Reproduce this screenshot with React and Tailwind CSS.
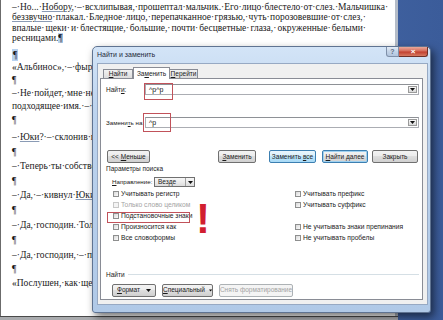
import React from "react";

const serif = "font-['Liberation_Serif','Times_New_Roman',serif]";
const ui = "font-['Liberation_Sans','Arial',sans-serif]";

const topLines = [
  ["–·", "Но...·", { u: "Нобору", r: ",·" }, "–·", "всхлипывая,·", "прошептал·", "мальчик.·", "Его·", "лицо·", "блестело·", "от·", "слез.·", "Мальчишка·"],
  [{ u: "беззвучно", r: "·" }, "плакал.·", "Бледное·", "лицо,·", "перепачканное·", "грязью,·", "чуть·", "порозовевшие·", "от·", "слез,·"],
  ["впалые·", "щеки·", "и·", "блестящие,·", "большие,·", "почти·", "бесцветные·", "глаза,·", "окруженные·", "белыми·"],
];

const lowerLines = [
  { mt: "mt-[6px]", hl: true },
  { mt: "mt-0", a: "«Альбинос»,·–·фыркнул·Ясон.¶" },
  { mt: "mt-[1px]", a: "¶" },
  { mt: "mt-[1px]", a: "–·Не·пойдет,·мне·не·нравится.·Надо·придумать·тебе·более·" },
  { mt: "mt-[1px]", a: "подходящее·имя.·–·Юноша·на·мгновение·задумался.¶" },
  { mt: "mt-[2px]", a: "¶" },
  { mt: "mt-[5px]", a: "–·", u: "Юки", b: "?·–·склонив·голову,·переспросил·мальчик.¶" },
  { mt: "mt-[3px]", a: "¶" },
  { mt: "mt-[2px]", a: "–·Теперь·ты·собственность·Ясона.¶" },
  { mt: "mt-[3px]", a: "¶" },
  { mt: "mt-[2px]", a: "–·Да,·–·кивнул·", u: "Юки", b: ".¶" },
  { mt: "mt-[3px]", a: "¶" },
  { mt: "mt-[3px]", a: "–·Да,·господин.·Только·так·и·никак·иначе.¶" },
  { mt: "mt-[3px]", a: "¶" },
  { mt: "mt-[3px]", a: "–·Да,·господин,·–·послушно·повторил·мальчик.¶" },
  { mt: "mt-[2px]", a: "¶" },
  { mt: "mt-[2px]", a: "«Послушен,·как·щенок»,·–·подумал·Ясон.¶" },
];

function Word({ w }) {
  if (typeof w === "string") return <span>{w}</span>;
  return (
    <span>
      <span className="underline decoration-[#8a9bb5] underline-offset-[1px]">{w.u}</span>
      {w.r}
    </span>
  );
}

function Arrow() {
  return (
    <svg width="5" height="3" viewBox="0 0 5 3">
      <path d="M0 0h5L2.5 3z" fill="#111" />
    </svg>
  );
}

const btnBase = "flex items-center justify-center h-[13px] rounded-[2px] border text-[6.5px] whitespace-nowrap overflow-hidden text-[#1b1b1b]";
const btnNormal = "border-[#707070] bg-[linear-gradient(#f3f3f3,#ececec_45%,#dedede_50%,#d0d0d0)]";
const btnHover = "border-[#3c7fb1] bg-[linear-gradient(#eaf6fd,#d9f0fc_45%,#bee6fd_50%,#a7d9f5)]";
const btnDefault = "border-[#3c7fb1] bg-[linear-gradient(#f3f3f3,#ececec_45%,#dedede_50%,#d0d0d0)] shadow-[inset_0_0_0_1px_#9fd1f0]";

function Field({ value }) {
  return (
    <div className="flex-1 h-[11px] border border-[#abadb3] border-t-[#8e9196] bg-white flex items-center">
      <span className="pl-[3px] text-[7px] leading-none text-[#111]">{value}</span>
      <div className="ml-auto mr-[1px] w-[9px] h-[7px] border border-[#9a9a9a] bg-[linear-gradient(#f7f7f7,#d9d9d9)] flex items-center justify-center">
        <Arrow />
      </div>
    </div>
  );
}

function Check({ label, disabled }) {
  return (
    <div className="h-[11px] flex items-center gap-[2px] whitespace-nowrap">
      <div
        className={
          disabled
            ? "w-[6px] h-[6px] border border-[#c8c8c8] bg-[#f4f4f4]"
            : "w-[6px] h-[6px] border border-[#8e8f8f] bg-[linear-gradient(135deg,#d8d8d8,#fbfbfb)]"
        }
      />
      {label && (
        <span className={disabled ? "text-[6.7px] text-[#a3a3a3]" : "text-[6.7px] text-[#1b1b1b]"}>{label}</span>
      )}
    </div>
  );
}

function Dialog() {
  return (
    <div className={`absolute left-[92px] top-[46px] w-[339px] h-[267px] flex flex-col rounded-t-[5px] rounded-b-[3px] border border-[#5f7391] bg-[linear-gradient(#d3e4f7,#bcd3ee_25%,#b0c9e7)] shadow-[3px_4px_8px_rgba(0,0,0,0.55)] ${ui}`}>
      <div className="relative h-[16px] flex items-center pl-[4px] text-[7px] text-[#1e2a3a] whitespace-nowrap">
        Найти и заменить
        <div className="absolute right-[2px] top-0 flex">
          <div className="w-[13px] h-[10px] rounded-bl-[3px] border border-t-0 border-[#7e8fa8] bg-[linear-gradient(#e4ecf6,#c3d3e7_50%,#b2c5de)] flex items-center justify-center text-[7px] font-bold leading-none text-[#5e6e85]">
            ?
          </div>
          <div className="w-[29px] h-[10px] rounded-br-[3px] border border-t-0 border-l-0 border-[#6e3027] bg-[linear-gradient(#e9a99b,#d46b5a_45%,#c2402f_55%,#d67a62)] flex items-center justify-center text-[8px] font-bold leading-none text-white">
            ×
          </div>
        </div>
      </div>

      <div className="ml-[4px] mr-[2px] mb-[7px] flex-1 flex flex-col border border-[#97a9c3] bg-[#f0f0f0] pl-[2px] pr-[4px] pt-[3px]">
        <div className="h-[11px] flex items-end pl-[3px] text-[6.5px] text-[#1b1b1b] whitespace-nowrap">
          <div className="w-[30px] h-[9px] flex items-center justify-center border border-b-0 border-[#898c95] bg-[linear-gradient(#f2f2f2,#dcdcdc)]">
            <span><span className="underline">Н</span>айти</span>
          </div>
          <div className="relative z-10 -mb-px w-[37px] h-[12px] flex items-center justify-center border border-b-0 border-[#898c95] bg-white">
            <span>За<span className="underline">м</span>енить</span>
          </div>
          <div className="w-[28px] h-[9px] flex items-center justify-center border border-b-0 border-l-0 border-[#898c95] bg-[linear-gradient(#f2f2f2,#dcdcdc)]">
            <span><span className="underline">П</span>ерейти</span>
          </div>
        </div>

        <div className="relative h-[222px] flex flex-col border border-[#898c95] bg-white pl-[5px] pr-[3px] text-[6.5px] text-[#1b1b1b] whitespace-nowrap">
          <div className="mt-[5px] h-[11px] flex items-center">
            <span className="w-[39px]">Найт<span className="underline">и</span>:</span>
            <Field value="^p^p" />
          </div>
          <div className="mt-[22px] h-[11px] flex items-center">
            <span className="w-[39px] text-[6.2px]">Замени<span className="underline">т</span>ь на:</span>
            <Field value="^p" />
          </div>

          <div className="mt-[22px] h-[13px] flex">
            <div className={`${btnBase} ${btnNormal} ml-[1px] w-[43px]`}>
              <span>&lt;&lt; <span className="underline">М</span>еньше</span>
            </div>
            <div className={`${btnBase} ${btnNormal} ml-[68px] w-[38px]`}>
              <span><span className="underline">З</span>аменить</span>
            </div>
            <div className={`${btnBase} ${btnHover} ml-[13px] w-[47px]`}>
              <span>Заменить <span className="underline">в</span>се</span>
            </div>
            <div className={`${btnBase} ${btnDefault} ml-[6px] w-[46px]`}>
              <span><span className="underline">Н</span>айти далее</span>
            </div>
            <div className={`${btnBase} ${btnNormal} ml-[4px] w-[46px]`}>Закрыть</div>
          </div>

          <div className="mt-[2px] h-[8px] flex items-center">Параметры поиска</div>

          <div className="mt-[4px] h-[10px] flex items-center">
            <span className="ml-[6px] w-[42px] text-[6.2px]"><span className="underline">Н</span>аправление:</span>
            <div className="w-[41px] h-[10px] flex items-center border border-[#707070] bg-[linear-gradient(#f7f7f7,#ececec_50%,#dcdcdc)]">
              <span className="pl-[3px]">Везде</span>
              <div className="ml-auto w-[9px] h-full border-l border-[#a0a0a0] flex items-center justify-center">
                <Arrow />
              </div>
            </div>
          </div>

          <div className="mt-[1.5px] grid grid-cols-[182px_1fr] pl-[7px]">
            <div className="flex flex-col">
              <Check label="Учитывать регистр" />
              <Check label="Только слово целиком" disabled />
              <Check label="Подстановочные знаки" />
              <Check label="Произносится как" />
              <Check label="Все словоформы" />
            </div>
            <div className="flex flex-col">
              <Check label="Учитывать префикс" />
              <Check label="Учитывать суффикс" />
              <div className="h-[11px]" />
              <Check label="Не учитывать знаки препинания" />
              <Check label="Не учитывать пробелы" />
            </div>
          </div>

          <div className="mt-[27px] h-[8px] flex items-center">
            <span>Найти</span>
            <div className="ml-[3px] flex-1 h-px bg-[#d5dfe5]" />
          </div>

          <div className="mt-[5px] h-[12px] flex">
            <div className={`${btnBase} ${btnNormal} h-[12px] ml-[6px] w-[44px] gap-[6px]`}>
              <span><span className="underline">Ф</span>ормат</span>
              <Arrow />
            </div>
            <div className={`${btnBase} ${btnNormal} h-[12px] ml-[6px] w-[51px] gap-[4px]`}>
              <span><span className="underline">С</span>пециальный</span>
              <Arrow />
            </div>
            <div className={`${btnBase} h-[12px] ml-[6px] w-[74px] border-[#adb2b5] bg-[#f4f4f4] text-[#a3a3a3]`}>
              Снять форматирование
            </div>
          </div>

          <div className="absolute left-[43px] top-[4px] w-[29px] h-[17px] border-[1.5px] border-[#c1525a]" />
          <div className="absolute left-[42px] top-[34px] w-[28px] h-[19px] border-[1.5px] border-[#c1525a]" />
          <div className="absolute left-[6px] top-[133px] w-[83px] h-[11px] border-[1.5px] border-[#c1525a]" />
          <div className="absolute left-[95px] top-[119px] font-['Liberation_Sans',sans-serif] text-[42px] font-bold leading-none text-[#d21f30]">
            !
          </div>
        </div>
      </div>
    </div>
  );
}

export default function App() {
  return (
    <div className="relative w-[443px] h-[320px] overflow-hidden flex bg-[linear-gradient(90deg,#6a8ccb,#4a6dad_40%,#3b5c9a)]">
      <div className="w-[398px] flex flex-col">
        <div className={`h-[316px] overflow-hidden bg-white border-l border-[#6b6b6b] border-r-[3px] border-r-[#b4bcc8] text-[9.5px] text-[#1a1a1a] ${serif}`}>
          <div className="pt-[2px] pl-[11px] w-[365px] leading-[10.3px]">
            {topLines.map((line, i) => (
              <div key={i} className="flex justify-between whitespace-nowrap">
                {line.map((w, j) => (
                  <Word key={j} w={w} />
                ))}
              </div>
            ))}
            <div className="whitespace-nowrap">
              ресницами.<span className="bg-[#b8d2ef]">¶</span>
            </div>
          </div>
          <div className="pl-[11px] flex flex-col">
            {lowerLines.map((l, i) =>
              l.hl ? (
                <div key={i} className={`h-[12px] leading-[12px] ${l.mt}`}>
                  <span className="inline-block bg-[#b8d2ef] px-px">¶</span>
                </div>
              ) : (
                <div key={i} className={`h-[12px] leading-[12px] whitespace-nowrap ${l.mt}`}>
                  {l.a}
                  {l.u && <span className="underline decoration-[#8a9bb5] underline-offset-[1px]">{l.u}</span>}
                  {l.b}
                </div>
              )
            )}
          </div>
        </div>
        <div className="h-px bg-[#4a4a4a]" />
        <div className="flex-1 bg-[#a9abae]" />
      </div>
      <Dialog />
    </div>
  );
}
